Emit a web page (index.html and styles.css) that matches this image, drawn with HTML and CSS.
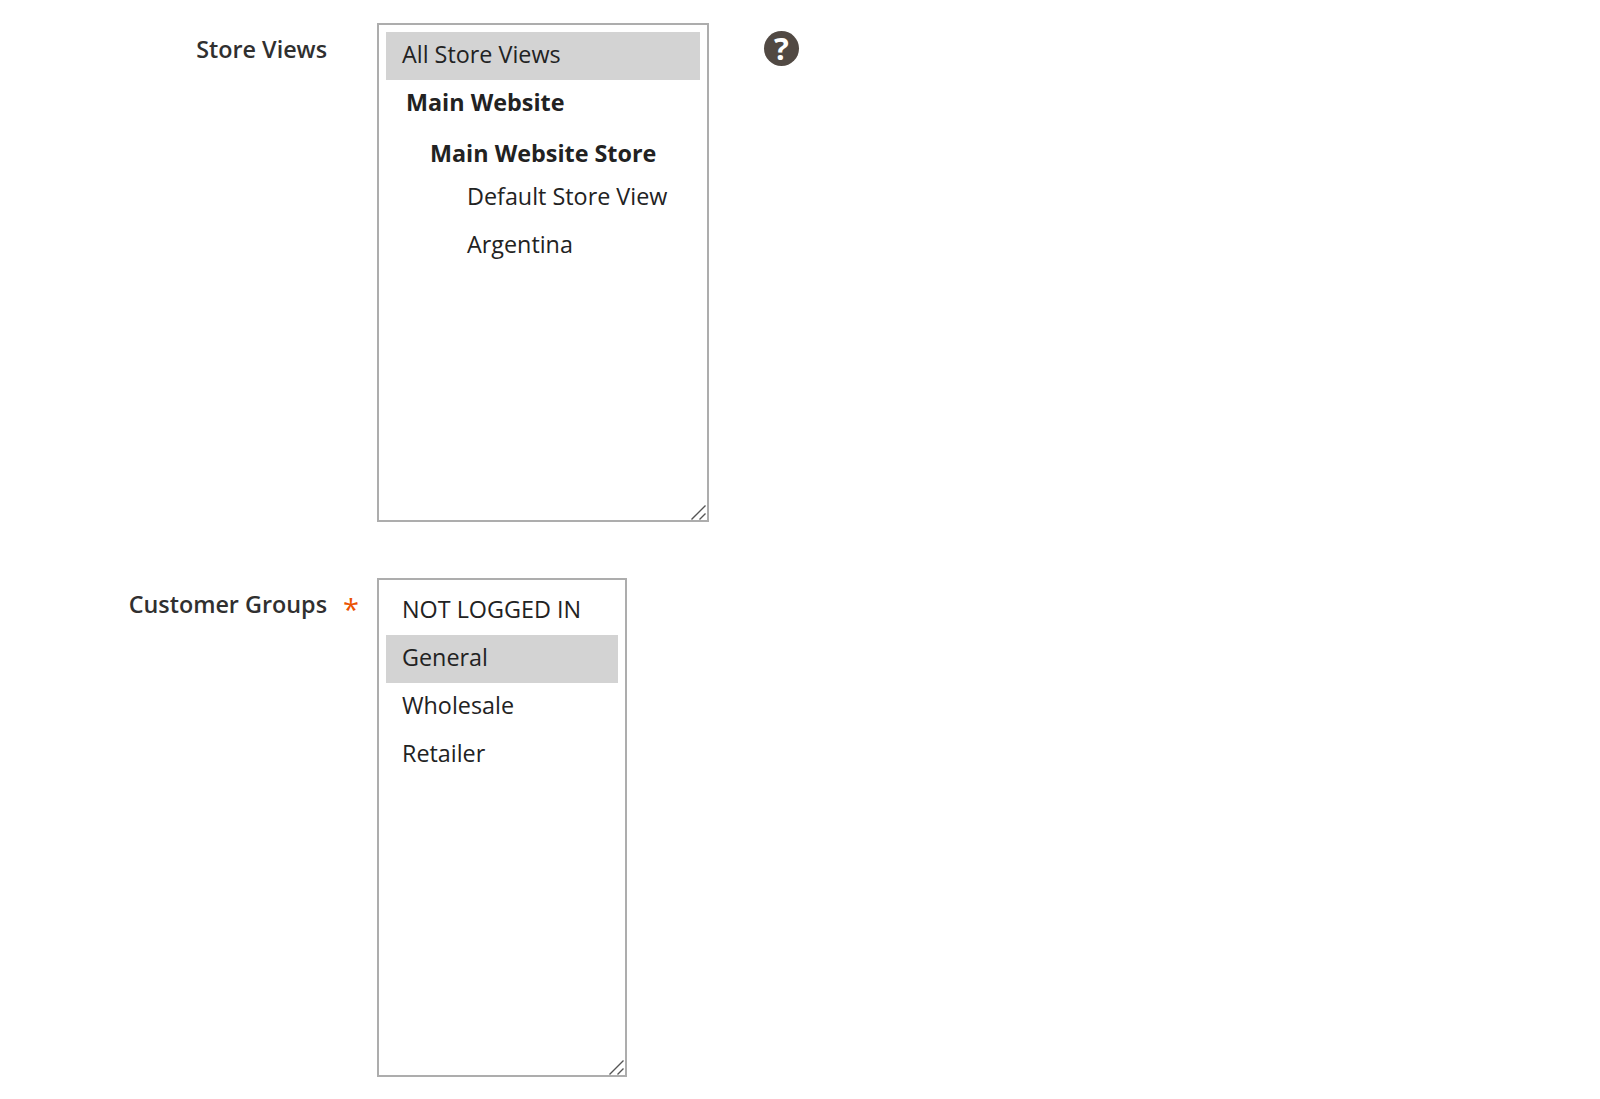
FILE: index.html
```html
<!DOCTYPE html>
<html lang="en">
<head>
  <meta charset="UTF-8">
  <title>Store Views and Customer Groups</title>
  <link rel="stylesheet" href="styles.css">
</head>
<body>

  <form class="admin-form">

    <!-- Store Views -->
    <div class="field">
      <label class="field-label">Store Views</label>
      <div class="listbox listbox-stores">
        <div class="option selected">All Store Views</div>
        <div class="group-website">Main Website</div>
        <div class="group-store">Main Website Store</div>
        <div class="option-view">Default Store View</div>
        <div class="option-view">Argentina</div>
        <svg class="resize-grip" width="18" height="18" viewBox="0 0 18 18">
          <path d="M2.500 17.500 L16.500 3.500 M10.500 17.500 L16.500 11.500"/>
        </svg>
      </div>
      <span class="help-icon">?</span>
    </div>

    <!-- Customer Groups -->
    <div class="field">
      <label class="field-label required">Customer Groups</label>
      <div class="listbox listbox-groups">
        <div class="option">NOT LOGGED IN</div>
        <div class="option selected">General</div>
        <div class="option">Wholesale</div>
        <div class="option">Retailer</div>
        <svg class="resize-grip" width="18" height="18" viewBox="0 0 18 18">
          <path d="M2.500 17.500 L16.500 3.500 M10.500 17.500 L16.500 11.500"/>
        </svg>
      </div>
    </div>

  </form>

</body>
</html>
```

FILE: styles.css
```css
body {
  margin: 0;
  background: #fff;
  font-family: "Open Sans", sans-serif;
  color: #222;
}

.admin-form {
  display: flex;
  flex-direction: column;
  gap: 56px;
  padding-top: 23px;
}

.field {
  display: flex;
  align-items: flex-start;
}

.field-label {
  width: 327px;
  padding-top: 10px;
  font-size: 23.35px;
  line-height: 32px;
  font-weight: 600;
  text-align: right;
  color: #303030;
}

.required {
  position: relative;
}

.required::after {
  content: "*";
  position: absolute;
  left: 343px;
  top: 15px;
  font-size: 29px;
  font-weight: 400;
  color: #eb5202;
}

.listbox {
  position: relative;
  box-sizing: border-box;
  height: 499px;
  margin-left: 50px;
  padding: 7px;
  border: 2px solid #adadad;
  font-size: 23.35px;
  color: #222;
}

.listbox-stores {
  width: 332px;
}

.listbox-groups {
  width: 250px;
}

.option,
.option-view {
  height: 48px;
  line-height: 45px;
  padding-left: 16px;
  white-space: nowrap;
}

.option-view {
  line-height: 46px;
  padding-left: 81px;
}

.selected {
  background: #d3d3d3;
}

.group-website,
.group-store {
  font-weight: 700;
  white-space: nowrap;
}

.group-website {
  height: 47px;
  line-height: 45px;
  padding-left: 20px;
}

.group-store {
  height: 46px;
  line-height: 52px;
  padding-left: 44px;
}

.resize-grip {
  position: absolute;
  right: 0;
  bottom: 0;
}

.resize-grip path {
  fill: none;
  stroke: #555;
  stroke-width: 1.4;
}

.help-icon {
  display: flex;
  align-items: center;
  justify-content: center;
  width: 35px;
  height: 35px;
  margin-left: 55px;
  margin-top: 8px;
  border-radius: 50%;
  background: #514943;
  color: #fff;
  font-size: 31px;
  font-weight: 700;
  line-height: 1;
}
```
